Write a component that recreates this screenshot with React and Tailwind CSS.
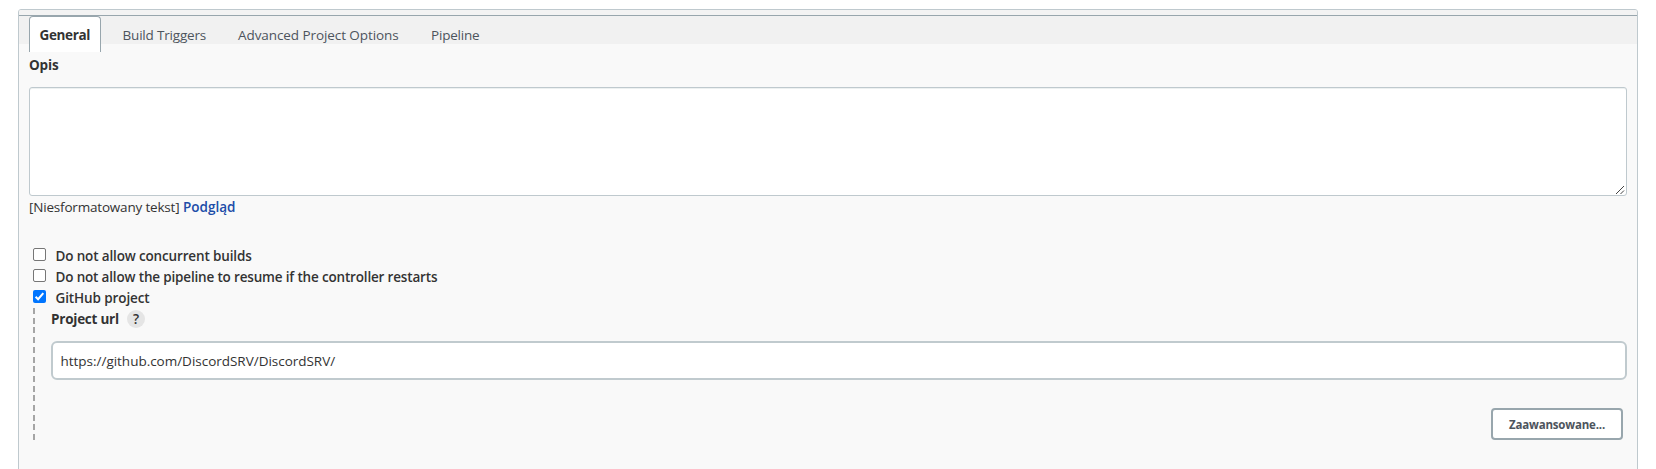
import React from "react";

function Checkbox({ checked }) {
  return checked ? (
    <span role="checkbox" aria-checked="true" className="flex size-[13px] items-center justify-center rounded-[2px] bg-[#0075ff]">
      <svg viewBox="0 0 13 13" className="size-[13px]" fill="none" stroke="white" strokeWidth="2">
        <path d="M2.6 6.7 L5.1 9.2 L10.3 3.1" />
      </svg>
    </span>
  ) : (
    <span role="checkbox" aria-checked="false" className="size-[13px] rounded-[2px] border border-[#767676] bg-white" />
  );
}

function Option({ checked, className, children }) {
  return (
    <label className="flex h-[21px] items-start pl-1">
      <Checkbox checked={checked} />
      <span className={`ml-[9.5px] font-semibold text-[#333] ${className}`}>{children}</span>
    </label>
  );
}

export default function App() {
  return (
    <div className="h-[469px] overflow-hidden bg-white pt-[9px] pl-[18px] font-['Open_Sans','Noto_Sans',sans-serif] text-[13.5px] leading-5 text-[#333]">
      <main className="h-[480px] w-[1620px] rounded-t-[3px] border border-[#bfc9ce] bg-[#f9f9f9]">
        <div className="h-[5px] rounded-t-[2px] bg-[#f3f3f3]" />
        <nav className="flex h-[29px] items-start border-t border-[#98a6ad] bg-[#f1f1f1] pl-[10px] whitespace-nowrap text-[#4d545d]">
          <div className="h-9 w-[72px] rounded-t-[4px] border border-b-0 border-[#98a6ad] bg-white pt-[8px] pl-[9.5px] font-bold tracking-[-0.36px] text-[#333]">
            General
          </div>
          <div className="mt-[9px] ml-[21.5px] w-[115.5px] tracking-[-0.18px]">Build Triggers</div>
          <div className="mt-[9px] w-[193px] tracking-[-0.08px]">Advanced Project Options</div>
          <div className="mt-[9px] tracking-[-0.2px]">Pipeline</div>
        </nav>
        <section className="px-[10px] pt-[11px]">
          <h2 className="font-bold tracking-[-0.15px]">Opis</h2>
          <div className="mt-3 flex h-[109px] items-end justify-end rounded-[3px] border border-[#bfc9ce] bg-white shadow-[inset_0_1px_0_#edf1f1]">
            <svg viewBox="0 0 10 10" className="mr-px size-[10px]" stroke="#444" strokeWidth="1">
              <path d="M1 9 L9 1 M5.5 9 L9 5.5" />
            </svg>
          </div>
          <p className="mt-px flex">
            <span className="w-[154px] tracking-[-0.19px]">[Niesformatowany tekst]</span>
            <a className="font-semibold tracking-[-0.01px] text-[#204ca8]">Podgląd</a>
          </p>
          <div className="mt-[31px]">
            <Option className="-mt-[2px] tracking-[-0.15px]">Do not allow concurrent builds</Option>
            <Option className="-mt-[2px] tracking-[-0.17px]">Do not allow the pipeline to resume if the controller restarts</Option>
            <Option checked className="-mt-[2px] tracking-[-0.11px]">GitHub project</Option>
          </div>
          <div className="-mt-[3px] flex pl-1">
            <div className="h-[132px] w-[2px] bg-[repeating-linear-gradient(to_bottom,#a5a5a5_0px,#a5a5a5_6px,transparent_6px,transparent_9.7px)]" />
            <div className="ml-4 flex-1">
              <div className="mt-px flex h-5 items-center">
                <span className="w-[76px] font-bold tracking-[-0.24px]">Project url</span>
                <span className="flex size-[18px] items-center justify-center rounded-full bg-[#e5e5e5] text-[13.5px] font-semibold">?</span>
              </div>
              <div className="mt-3 flex h-[39px] items-center rounded-[6px] border-2 border-[#c0cace] bg-white pl-[7.5px] tracking-[-0.02px]">
                https://github.com/DiscordSRV/DiscordSRV/
              </div>
              <div className="mt-7 flex justify-end pr-1">
                <button className="flex h-8 w-[132px] items-center rounded-[4px] border-2 border-[#98a6ad] bg-white pt-[2px] pl-4 text-[11.5px] font-bold tracking-[-0.18px] text-[#4d545d]">
                  Zaawansowane...
                </button>
              </div>
            </div>
          </div>
        </section>
      </main>
    </div>
  );
}
